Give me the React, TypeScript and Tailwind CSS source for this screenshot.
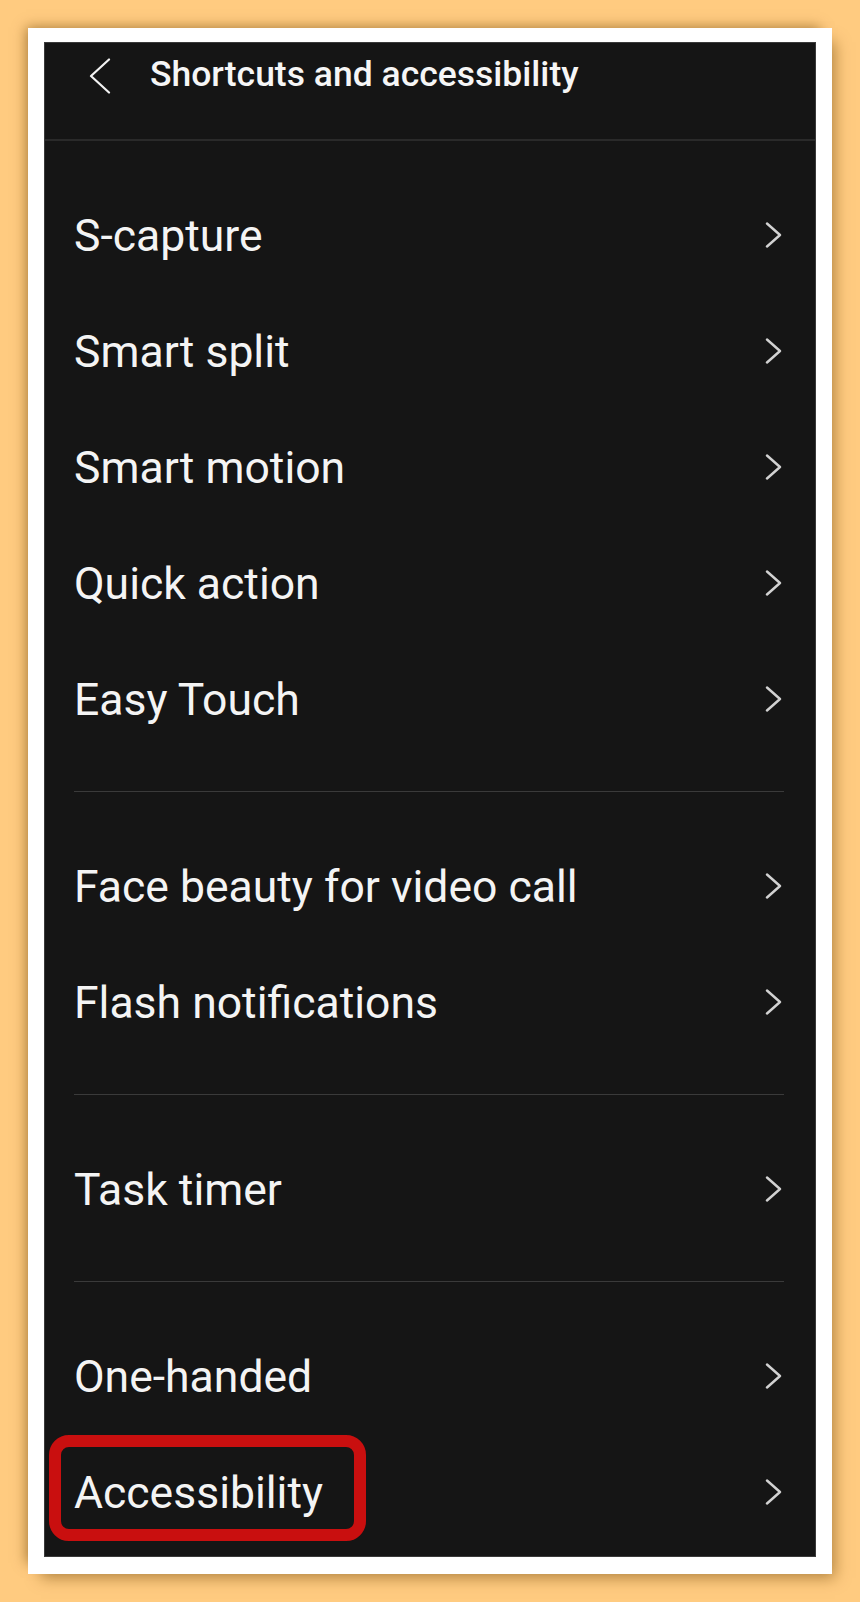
import { ReactNode } from "react";

type Item = { label: string; highlight?: boolean };

const GROUPS: Item[][] = [
  [
    { label: "S-capture" },
    { label: "Smart split" },
    { label: "Smart motion" },
    { label: "Quick action" },
    { label: "Easy Touch" },
  ],
  [{ label: "Face beauty for video call" }, { label: "Flash notifications" }],
  [{ label: "Task timer" }],
  [{ label: "One-handed" }, { label: "Accessibility", highlight: true }],
];

const ChevronRight = () => (
  <svg width="17" height="26" viewBox="0 0 17 26" fill="none">
    <polyline
      points="2,1.5 15,13 2,24.5"
      stroke="#d2d2d2"
      strokeWidth="2.4"
      strokeLinecap="round"
      strokeLinejoin="round"
    />
  </svg>
);

const ChevronLeft = () => (
  <svg width="22" height="36" viewBox="0 0 22 36" fill="none">
    <polyline
      points="20,1.5 2,18 20,34.5"
      stroke="#f2f2f2"
      strokeWidth="2.2"
      strokeLinecap="round"
      strokeLinejoin="round"
    />
  </svg>
);

const Row = ({ item }: { item: Item }) => (
  <div className="relative flex h-[116px] items-center justify-between pl-[29px] pr-[33px]">
    <span className="pt-[3px] text-[44.5px] leading-none text-[#f4f4f4]">{item.label}</span>
    <ChevronRight />
    {item.highlight && (
      <div className="pointer-events-none absolute left-[4px] top-[1px] h-[106px] w-[317px] rounded-[20px] border-[12px] border-[#c90f0f]" />
    )}
  </div>
);

const Group = ({ children, last }: { children: ReactNode; last?: boolean }) => (
  <div className={last ? "pt-[36px]" : "pt-[36px] pb-[34px]"}>{children}</div>
);

export default function App() {
  return (
    <div
      className="min-h-screen bg-[#ffcb80] p-[28px]"
      style={{ fontFamily: "Roboto, 'Noto Sans', sans-serif" }}
    >
      <div className="h-[1546px] bg-white pt-[14px] pb-[17px] px-[16px] shadow-[-7px_-6px_12px_-5px_rgba(110,70,10,0.55),8px_9px_14px_-5px_rgba(110,70,10,0.5)]">
        <div className="h-full overflow-hidden border border-[#3a3a3a] bg-[#151515]">
          {/* header */}
          <div className="h-[98px] border-b-2 border-[#2a2a2a]">
            <div className="flex h-[64px] items-center">
              <div className="ml-[44px] flex w-[61px] pt-[2px]">
                <ChevronLeft />
              </div>
              <span className="text-[35.5px] font-medium leading-none text-[#f6f6f6]">
                Shortcuts and accessibility
              </span>
            </div>
          </div>

          {/* list */}
          {GROUPS.map((group, gi) => (
            <div key={gi}>
              {gi > 0 && <div className="mx-[29px] mr-[31px] h-px bg-[#3a3a3a]" />}
              <Group last={gi === GROUPS.length - 1}>
                {group.map((item) => (
                  <Row key={item.label} item={item} />
                ))}
              </Group>
            </div>
          ))}
        </div>
      </div>
    </div>
  );
}
